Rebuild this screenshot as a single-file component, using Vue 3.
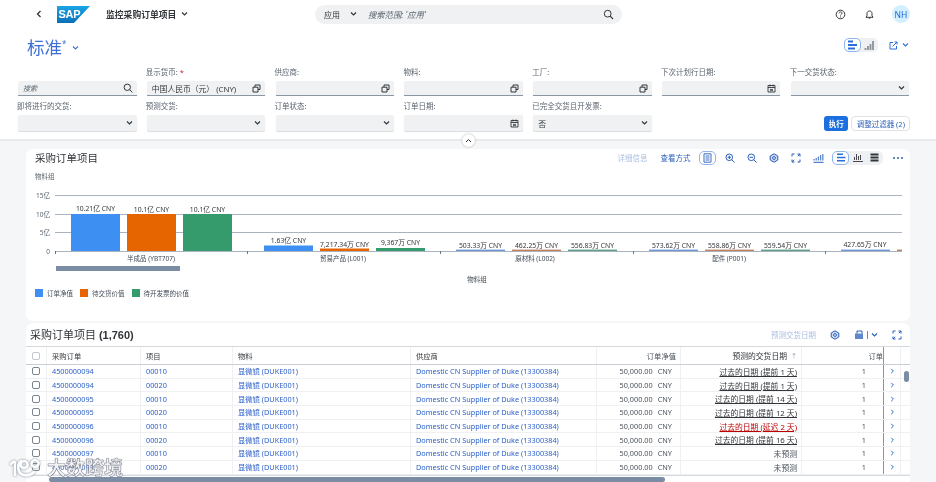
<script setup>
const filterRow1 = [
  { label: '', value: '', placeholder: '搜索', icon: 'search' },
  { label: '显示货币:', required: true, value: '中国人民币（元） (CNY)', icon: 'copy' },
  { label: '供应商:', value: '', icon: 'copy' },
  { label: '物料:', value: '', icon: 'copy' },
  { label: '工厂:', value: '', icon: 'copy' },
  { label: '下次计划行日期:', value: '', icon: 'cal' },
  { label: '下一交货状态:', value: '', icon: 'chev' },
]
const filterRow2 = [
  { label: '即将进行的交货:', value: '', icon: 'chev' },
  { label: '预测交货:', value: '', icon: 'chev' },
  { label: '订单状态:', value: '', icon: 'chev' },
  { label: '订单日期:', value: '', icon: 'cal' },
  { label: '已完全交货且开发票:', value: '否', icon: 'chev' },
]
const groups = [
  { x: 71, tick: 247, label: '半成品 (YBT707)', lx: 151, bars: [[37, '10.21亿 CNY'], [37, '10.1亿 CNY'], [37, '10.1亿 CNY']], ly: [-3, -2, -2] },
  { x: 264, tick: 440, label: '贸易产品 (L001)', lx: 343, bars: [[5.5, '1.63亿 CNY'], [2.5, '7,217.34万 CNY'], [3, '9,367万 CNY']], ly: [-3, -2, -3] },
  { x: 456, tick: 633, label: '原材料 (L002)', lx: 535, bars: [[1.4, '503.33万 CNY'], [1.4, '462.25万 CNY'], [1.4, '556.83万 CNY']], ly: [-2, -2, -2] },
  { x: 649, tick: 825, label: '配件 (P001)', lx: 729, bars: [[1.4, '573.62万 CNY'], [1.4, '558.86万 CNY'], [1.4, '559.54万 CNY']], ly: [-2, -2, -2] },
]
const colors = ['#3d8ff2', '#e76500', '#369b6c']
const softColors = ['#6d97d6', '#c47f5e', '#5f9d84']
const gridLines = [
  { y: 195.5, label: '15亿' },
  { y: 214.5, label: '10亿' },
  { y: 232.5, label: '5亿' },
  { y: 251.5, label: '0' },
]
const legend = [
  { color: colors[0], text: '订单净值' },
  { color: colors[1], text: '待交货价值' },
  { color: colors[2], text: '待开发票的价值' },
]
const barX = (g, i) => g.x + i * 56
const barColor = (g, i) => (g.bars[i][0] < 2 ? softColors[i] : colors[i])
const rows = [
  ['4500000094', '00010', '过去的日期 (提前 1 天)', 'past'],
  ['4500000094', '00020', '过去的日期 (提前 1 天)', 'past'],
  ['4500000095', '00010', '过去的日期 (提前 14 天)', 'past'],
  ['4500000095', '00020', '过去的日期 (提前 12 天)', 'past'],
  ['4500000096', '00010', '过去的日期 (延迟 2 天)', 'late'],
  ['4500000096', '00020', '过去的日期 (提前 16 天)', 'past'],
  ['4500000097', '00010', '未预测', 'none'],
  ['4500000097', '00020', '未预测', 'none'],
]
</script>

<template>
  <div class="page">
    <header class="shell">
      <div class="shell-left">
        <svg class="back" width="6" height="8" viewBox="0 0 6 8"><path d="M4.500 1 1.500 4l3 3" fill="none" stroke="#32363a" stroke-width="1.300" /></svg>
        <svg class="logo" width="34" height="17" viewBox="0 0 34 17">
          <defs>
            <linearGradient id="sapg" x1="0" y1="0" x2="0" y2="1">
              <stop offset="0" stop-color="#1aa5e6" />
              <stop offset="1" stop-color="#0a6fb8" />
            </linearGradient>
          </defs>
          <path d="M0 0h33L17 17H0z" fill="url(#sapg)" />
          <text x="1.500" y="11.500" class="logo-text">SAP</text>
        </svg>
        <span class="app-title">监控采购订单项目</span>
        <svg class="mini" width="7" height="6" viewBox="0 0 7 6"><path d="m1 1.500 2.500 2.500L6 1.500" fill="none" stroke="#32363a" stroke-width="1.200" /></svg>
      </div>
      <div class="shell-search">
        <span class="scope">应用</span>
        <svg class="scope-chev" width="7" height="6" viewBox="0 0 7 6"><path d="m1 1.500 2.500 2.500L6 1.500" fill="none" stroke="#32363a" stroke-width="1.200" /></svg>
        <span class="search-hint">搜索范围: '应用'</span>
        <svg class="search-icon" width="11" height="11" viewBox="0 0 11 11"><circle cx="4.700" cy="4.700" r="3.400" fill="none" stroke="#32363a" stroke-width="1" /><path d="m7.200 7.200 2.800 2.800" stroke="#32363a" stroke-width="1.100" /></svg>
      </div>
      <div class="shell-right">
        <svg width="11" height="11" viewBox="0 0 11 11"><circle cx="5.500" cy="5.500" r="4.300" fill="none" stroke="#32363a" stroke-width="1" /><path d="M4 4.300c.2-1.900 3.200-1.700 3 .1-.1 1-1.500 1-1.500 2.100M5.500 7.500v1" fill="none" stroke="#32363a" stroke-width=".9" /></svg>
        <svg width="11" height="11" viewBox="0 0 11 11"><path d="M2 8.300h7L8 6.800V4.600C8 3 7 2 5.500 2S3 3 3 4.600v2.200zM4.700 9.200h1.600" fill="none" stroke="#32363a" stroke-width="1" /></svg>
        <span class="avatar">NH</span>
      </div>
    </header>

    <section class="filters">
      <div class="variant-row">
        <div class="variant">
          <span class="variant-name">标准<sup>*</sup></span>
          <svg width="7" height="6" viewBox="0 0 7 6"><path d="m1 1.500 2.500 2.500L6 1.500" fill="none" stroke="#3d6fd6" stroke-width="1.100" /></svg>
        </div>
        <div class="variant-actions">
          <div class="seg">
            <span class="seg-on">
              <svg width="11" height="10" viewBox="0 0 11 10"><path d="M1 1.500h5M1 5h9M1 8.500h7" stroke="#2a6fd8" stroke-width="2" /></svg>
            </span>
            <span class="seg-off">
              <svg width="11" height="10" viewBox="0 0 11 10"><path d="M1.500 10V8M4 10V6M6.500 10V4M9 10V1" stroke="#8b9199" stroke-width="1.800" /></svg>
            </span>
          </div>
          <svg class="share" width="9" height="9" viewBox="0 0 9 9"><path d="M4 1.500H1v6.500h6.500V5M3.500 5.500 8 1M5.500 1H8v2.500" fill="none" stroke="#2a6fd8" stroke-width="1" /></svg>
          <svg width="7" height="6" viewBox="0 0 7 6"><path d="m1 1.500 2.500 2.500L6 1.500" fill="none" stroke="#2a6fd8" stroke-width="1.100" /></svg>
        </div>
      </div>

      <div class="filter-grid">
        <div v-for="f in filterRow1" :key="f.label + 'a'" class="field">
          <label class="field-label">{{ f.label }}<i v-if="f.required" class="req">*</i></label>
          <div class="input underlined">
            <span v-if="f.placeholder" class="placeholder">{{ f.placeholder }}</span>
            <span v-else class="value">{{ f.value }}</span>
            <svg v-if="f.icon === 'search'" width="10" height="10" viewBox="0 0 10 10"><circle cx="4.300" cy="4.300" r="3.200" fill="none" stroke="#32363a" stroke-width="1" /><path d="m6.700 6.700 2.700 2.700" stroke="#32363a" stroke-width="1" /></svg>
            <svg v-else-if="f.icon === 'copy'" width="9" height="9" viewBox="0 0 9 9"><path d="M3 3V1h5v4.500H6M1 3.200h5V8H1z" fill="none" stroke="#32363a" stroke-width="1" /></svg>
            <svg v-else-if="f.icon === 'cal'" width="9" height="9" viewBox="0 0 9 9"><path d="M1 1.500h7V8H1zM1 3.500h7M3 .5v2M6 .5v2M3 5l3 2M6 5 3 7" fill="none" stroke="#32363a" stroke-width=".9" /></svg>
            <svg v-else width="7" height="6" viewBox="0 0 7 6"><path d="m1 1.500 2.500 2.500L6 1.500" fill="none" stroke="#32363a" stroke-width="1.200" /></svg>
          </div>
        </div>
        <div v-for="f in filterRow2" :key="f.label + 'b'" class="field">
          <label class="field-label">{{ f.label }}</label>
          <div class="input">
            <span class="value">{{ f.value }}</span>
            <svg v-if="f.icon === 'cal'" width="9" height="9" viewBox="0 0 9 9"><path d="M1 1.500h7V8H1zM1 3.500h7M3 .5v2M6 .5v2M3 5l3 2M6 5 3 7" fill="none" stroke="#32363a" stroke-width=".9" /></svg>
            <svg v-else width="7" height="6" viewBox="0 0 7 6"><path d="m1 1.500 2.500 2.500L6 1.500" fill="none" stroke="#32363a" stroke-width="1.200" /></svg>
          </div>
        </div>
        <div class="filter-buttons">
          <button class="btn-go">执行</button>
          <button class="btn-adapt">调整过滤器 (2)</button>
        </div>
      </div>
    </section>

    <div class="collapse-line">
      <span class="collapse-btn">
        <svg width="7" height="5" viewBox="0 0 7 5"><path d="m1 4 2.500-2.500L6 4" fill="none" stroke="#32363a" stroke-width="1" /></svg>
      </span>
    </div>

    <main class="content">
      <section class="chart-card">
        <div class="chart-head">
          <h2 class="chart-title">采购订单项目</h2>
          <div class="chart-tools">
            <span class="tool-disabled">详细信息</span>
            <span class="tool-link">查看方式</span>
            <span class="round-on">
              <svg width="9" height="10" viewBox="0 0 9 10"><path d="M1 .8h7v8.400H1zM2.500 3h4M2.500 5h4M2.500 7h4" fill="none" stroke="#2a5fb8" stroke-width=".9" /></svg>
            </span>
            <svg class="t1" width="10" height="10" viewBox="0 0 10 10"><circle cx="4.300" cy="4.300" r="3.300" fill="none" stroke="#2a5fb8" /><path d="m6.700 6.700 2.800 2.800M2.600 4.300h3.400M4.300 2.600V6" stroke="#2a5fb8" /></svg>
            <svg class="t2" width="10" height="10" viewBox="0 0 10 10"><circle cx="4.300" cy="4.300" r="3.300" fill="none" stroke="#2a5fb8" /><path d="m6.700 6.700 2.800 2.800M2.600 4.300h3.400" stroke="#2a5fb8" /></svg>
            <svg class="t3" width="10" height="10" viewBox="0 0 10 10"><path d="M5 .8 8.800 3v4L5 9.200 1.200 7V3z" fill="#cfdcf3" stroke="#2a5fb8" /><circle cx="5" cy="5" r="1.400" fill="#fff" stroke="#2a5fb8" /></svg>
            <svg class="t4" width="10" height="10" viewBox="0 0 10 10"><path d="M1 3.500V1h2.500M6.500 1H9v2.500M9 6.500V9H6.500M3.500 9H1V6.500M6.800 3.200 9 1M3.200 6.800 1 9" fill="none" stroke="#2a5fb8" /></svg>
            <svg class="t5" width="11" height="10" viewBox="0 0 11 10"><path d="M1 7.500V6M3.200 7.500V5M5.400 7.500V3.500M7.600 7.500V2M9.800 7.500V1" stroke="#5f88cc" stroke-width="1.300" /><path d="M.5 9.300h10" stroke="#2a5fb8" /></svg>
            <div class="seg seg-chart">
              <span class="seg-on">
                <svg width="10" height="9" viewBox="0 0 10 9"><path d="M1 1.200h6M1 4.500h8.500M1 7.800h8" stroke="#2a6fd8" stroke-width="1.400" /></svg>
              </span>
              <span class="seg-plain">
                <svg width="10" height="9" viewBox="0 0 10 9"><path d="M1.500 7V4M3.500 7V1M5.500 7V3M7.500 7V2M0 8.500h10" stroke="#32363a" stroke-width=".9" /></svg>
              </span>
              <span class="seg-plain">
                <svg width="9" height="9" viewBox="0 0 9 9"><path d="M.5 1.500h8M.5 4.500h8M.5 7.500h8" stroke="#32363a" stroke-width="2" /></svg>
              </span>
            </div>
            <span class="more"><i></i><i></i><i></i></span>
          </div>
        </div>
        <div class="chart-sub">物料组</div>

        <svg class="chart" width="884" height="152" viewBox="26 168 884 152">
          <g v-for="l in gridLines" :key="l.y">
            <line x1="55" x2="902" :y1="l.y" :y2="l.y" class="grid" />
            <text x="50" :y="l.y + 2.500" text-anchor="end" class="axis-num">{{ l.label }}</text>
          </g>
          <line x1="55.500" x2="55.500" y1="251" y2="254" class="tick" />
          <g v-for="g in groups" :key="g.x">
            <line :x1="g.tick + 0.500" :x2="g.tick + 0.500" y1="251" y2="254" class="tick" />
            <text :x="g.lx" y="261" text-anchor="middle" class="group-label">{{ g.label }}</text>
            <g v-for="(b, i) in g.bars" :key="i">
              <rect :x="barX(g, i)" :y="251 - b[0]" width="49" :height="b[0]" :fill="barColor(g, i)" />
              <text :x="barX(g, i) + 24.500" :y="251 - b[0] + g.ly[i]" text-anchor="middle" class="bar-label">{{ b[1] }}</text>
            </g>
          </g>
          <rect x="841" y="249.600" width="49" height="1.400" :fill="softColors[0]" />
          <rect x="897" y="249.600" width="5" height="1.400" :fill="softColors[1]" />
          <text x="865" y="247" text-anchor="middle" class="bar-label">427.65万 CNY</text>
          <rect x="56" y="266" width="124" height="5" class="chart-scroll" />
          <text x="477" y="282" text-anchor="middle" class="group-label">物料组</text>
        </svg>

        <div class="legend">
          <span v-for="l in legend" :key="l.text" class="legend-item">
            <i :style="{ background: l.color }"></i>{{ l.text }}
          </span>
        </div>
      </section>

      <section class="table-card">
        <div class="table-head">
          <h2 class="table-title">采购订单项目 <b>(1,760)</b></h2>
          <div class="table-tools">
            <span class="tool-disabled">预测交货日期</span>
            <svg width="10" height="10" viewBox="0 0 10 10"><path d="M5 .8 8.800 3v4L5 9.200 1.200 7V3z" fill="#cfdcf3" stroke="#2a5fb8" /><circle cx="5" cy="5" r="1.400" fill="#fff" stroke="#2a5fb8" /></svg>
            <span class="export">
              <svg width="10" height="10" viewBox="0 0 10 10"><path d="M1 3.500h8V9H1z" fill="#5f88cc" /><path d="M3 3.500V1h5v2.500" fill="none" stroke="#2a5fb8" /></svg>
              <i class="divider"></i>
              <svg width="7" height="6" viewBox="0 0 7 6"><path d="m1 1.500 2.500 2.500L6 1.500" fill="none" stroke="#2a5fb8" stroke-width="1.200" /></svg>
            </span>
            <svg width="10" height="10" viewBox="0 0 10 10"><path d="M1 3.500V1h2.500M6.500 1H9v2.500M9 6.500V9H6.500M3.500 9H1V6.500M6.800 3.200 9 1M3.200 6.800 1 9" fill="none" stroke="#2a5fb8" /></svg>
          </div>
        </div>

        <div class="table-wrap">
          <div class="row head-row">
            <div class="c c-check"><span class="box box-head"></span></div>
            <div class="c c-po">采购订单</div>
            <div class="c c-item">项目</div>
            <div class="c c-mat">物料</div>
            <div class="c c-sup">供应商</div>
            <div class="c c-net">订单净值</div>
            <div class="c c-date">预测的交货日期 <span class="sort">↑</span></div>
            <div class="c c-qty c-qty-head">订单</div>
            <div class="c c-nav"></div>
          </div>
          <div v-for="(r, i) in rows" :key="i" class="row">
            <div class="c c-check"><span class="box"></span></div>
            <div class="c c-po link">{{ r[0] }}</div>
            <div class="c c-item link">{{ r[1] }}</div>
            <div class="c c-mat link">显微镜 (DUKE001)</div>
            <div class="c c-sup link">Domestic CN Supplier of Duke (13300384)</div>
            <div class="c c-net"><span>50,000.00</span><span class="cur">CNY</span></div>
            <div class="c c-date">
              <span :class="{ past: r[3] === 'past', late: r[3] === 'late', none: r[3] === 'none' }">{{ r[2] }}</span>
            </div>
            <div class="c c-qty">1</div>
            <div class="c c-nav">
              <svg width="5" height="6" viewBox="0 0 5 6"><path d="m1.200 .8 2.200 2.200-2.200 2.200" fill="none" stroke="#2a6fd8" stroke-width="1" /></svg>
            </div>
          </div>
          <span class="v-thumb"></span>
        </div>
        <div class="h-track"><span class="h-thumb"></span></div>
      </section>
    </main>

    <div class="watermark">
      <svg class="wm-logo" width="36" height="27" viewBox="0 0 36 27"><path d="M3 10c2-3 4-3 4-1v12M13 7c-4 3-4 13 3 14 4 1 8-1 10-3M16 7a3.500 3.500 0 1 0 .1 0M27 6a3.500 3.500 0 1 0 .1 0" fill="none" stroke="#fff" stroke-width="2.600" stroke-linecap="round" /></svg>
      <span class="wm-text">大数跨境</span>
    </div>
  </div>
</template>

<style>
html, body { margin: 0; background: #fff; overflow: hidden; }
</style>

<style scoped>
.page {
  position: relative;
  width: 936px;
  height: 482px;
  overflow: hidden;
  display: flex;
  flex-direction: column;
  background: #fff;
  color: #32363a;
  font-family: "Noto Sans", "Noto Sans CJK SC", sans-serif;
  filter: blur(0.4px);
}
h2 { margin: 0; font-weight: 400; }
svg { display: block; flex: none; }

/* shell */
.shell { height: 28px; flex: none; display: flex; align-items: center; box-sizing: border-box; }
.shell-left { width: 315px; display: flex; align-items: center; padding-left: 36px; box-sizing: border-box; }
.back { margin-right: 15px; }
.logo { margin-right: 15px; margin-top: 1px; }
.logo-text { font: 800 11px "Liberation Sans", sans-serif; fill: #fff; letter-spacing: -.3px; }
.app-title { font-size: 8.800px; font-weight: 700; color: #32363a; margin-right: 5px; }
.shell-search {
  width: 307px; height: 19px; border-radius: 10px; background: #eff1f2;
  display: flex; align-items: center; padding: 0 8px 0 9px; box-sizing: border-box;
}
.scope { font-size: 8px; margin-right: 10px; }
.scope-chev { margin-right: 11px; }
.search-hint { font-size: 8.300px; font-style: italic; color: #5b6570; flex: 1; }
.shell-right { flex: 1; display: flex; align-items: center; justify-content: flex-end; padding-right: 26px; gap: 18px; }
.avatar {
  width: 18px; height: 18px; border-radius: 50%; background: #d1efff; color: #1f68d8;
  font-size: 8.500px; display: flex; align-items: center; justify-content: center; margin-left: -1px;
}

/* filters */
.filters { flex: none; box-sizing: border-box; }
.variant-row { height: 38px; display: flex; align-items: flex-start; justify-content: space-between; padding: 9px 27px 0 27px; box-sizing: border-box; }
.variant { display: flex; align-items: center; gap: 6px; height: 21px; }
.variant-name { font-size: 17.500px; line-height: 21px; color: #3d6fd6; }
.variant-name sup { font-size: 8px; line-height: 0; vertical-align: 7px; }
.variant-actions { display: flex; align-items: center; gap: 4px; margin-top: 1px; }
.seg { display: flex; align-items: center; background: #eef0f2; border-radius: 5px; height: 14px; }
.seg-on {
  width: 17px; height: 14px; border: 1px solid #8fb4ec; border-radius: 5px; background: #fff; box-sizing: border-box;
  display: flex; align-items: center; justify-content: center;
}
.seg-off, .seg-plain { width: 17px; height: 14px; display: flex; align-items: center; justify-content: center; }
.share { margin-left: 7px; }
.filter-grid {
  display: grid;
  grid-template-columns: repeat(7, 118.500px);
  column-gap: 10.300px;
  padding-left: 18px;
}
.field { display: flex; flex-direction: column; }
.field-label { height: 15px; font-size: 7.500px; line-height: 13px; color: #5b6570; white-space: nowrap; margin-left: -1px; }
.req { color: #c62b2b; font-style: normal; margin-left: 2px; }
.input {
  height: 16px; background: #eff1f2; border-radius: 2px; display: flex; align-items: center;
  justify-content: space-between; padding: 0 4px 0 5px; box-sizing: border-box; box-shadow: 0 1px 1px rgba(40,60,90,.18);
}
.underlined { border-bottom: 1px solid #8b96a5; border-radius: 2px 2px 0 0; height: 15px; box-shadow: none; margin-bottom: 4px; }
.value { font-size: 7.800px; color: #32363a; white-space: nowrap; }
.placeholder { font-size: 7px; font-style: italic; color: #5b6570; }
.filter-buttons { grid-column: 6 / 8; display: flex; align-items: flex-end; justify-content: flex-end; gap: 3px; margin-right: -1px; }
.btn-go {
  width: 24px; height: 15px; border: 0; border-radius: 3px; background: #1b6fe0; color: #fff;
  font: 700 7.500px "Noto Sans", "Noto Sans CJK SC", sans-serif; padding: 0;
}
.btn-adapt {
  width: 59px; height: 15px; border: 1px solid #dfe3e8; border-radius: 4px; background: #fff; color: #2a5fb8;
  font: 7.500px "Noto Sans", "Noto Sans CJK SC", sans-serif; padding: 0; white-space: nowrap;
}

.collapse-line { height: 10px; flex: none; margin-top: 8px; background: #f4f6f7; border-top: 2px solid #e8ebee; position: relative; box-sizing: border-box; }
.collapse-btn {
  position: absolute; left: 462px; top: -7px; width: 13px; height: 13px; border-radius: 50%; background: #fff;
  box-shadow: 0 0 2px rgba(0,0,0,.35); display: flex; align-items: center; justify-content: center;
}

/* content */
.content { flex: 1; min-height: 0; background: #f4f6f7; padding: 0 26px; display: flex; flex-direction: column; gap: 2px; }
.chart-card { height: 172px; flex: none; background: #fff; border-radius: 7px; position: relative; overflow: hidden; }
.chart-head { height: 17px; display: flex; justify-content: space-between; align-items: center; padding: 0 7px 0 9px; }
.chart-title { font-size: 10.500px; color: #32363a; }
.chart-tools { display: flex; align-items: center; gap: 12px; }
.tool-disabled { font-size: 7.500px; color: #a9bee2; }
.tool-link { font-size: 7.500px; color: #2a5fb8; margin-left: 1px; margin-right: -3px; }
.round-on {
  width: 17px; height: 14px; border: 1px solid #8fb4ec; border-radius: 5px; display: flex; align-items: center; justify-content: center; box-sizing: border-box; margin-right: -3px;
}
.seg-chart { margin-left: -4px; }
.more { display: flex; gap: 1.800px; margin-left: -2px; }
.more i { width: 2px; height: 2px; border-radius: 50%; background: #2a5fb8; }
.chart-sub { font-size: 6.500px; line-height: 10px; color: #5b6570; padding-left: 9px; margin-top: 6px; }
.chart { position: absolute; left: 0; top: 19px; }
.grid { stroke: #a9b4c0; stroke-width: 1; }
.tick { stroke: #6a7480; stroke-width: 1; }
.axis-num { font-size: 6.500px; fill: #5b6570; }
.group-label { font-size: 6.500px; fill: #404a55; }
.bar-label { font-size: 6.800px; fill: #32363a; }
.chart-scroll { fill: #7b8ca5; }
.legend { position: absolute; left: 9px; top: 139px; display: flex; gap: 7px; font-size: 6.500px; color: #404a55; }
.legend-item { display: flex; align-items: center; gap: 4px; white-space: nowrap; }
.legend-item i { width: 8px; height: 8px; display: block; }

/* table */
.table-card { flex: 1; min-height: 0; background: #fff; border-radius: 7px 7px 0 0; display: flex; flex-direction: column; overflow: hidden; }
.table-head { height: 23px; flex: none; display: flex; justify-content: space-between; align-items: center; padding: 0 8px 0 4px; box-sizing: border-box; }
.table-title { font-size: 11px; color: #32363a; margin-top: -1px; }
.table-title b { font-family: "Liberation Sans", sans-serif; font-weight: 700; font-size: 11px; }
.table-tools { display: flex; align-items: center; gap: 14px; }
.export { display: flex; align-items: center; gap: 3px; }
.divider { width: 1px; height: 8px; background: #5f88cc; }
.table-wrap { position: relative; border-top: 1px solid #d5dadf; border-bottom: 1px solid #d5dadf; flex: none; }
.row { display: flex; height: 13.700px; border-bottom: 1px solid #eef0f2; box-sizing: border-box; font-size: 7.300px; }
.head-row { height: 18px; border-bottom: 1px solid #c9ced4; color: #32363a; }
.c { display: flex; align-items: center; box-sizing: border-box; border-right: 1px solid #eef0f2; padding: 0 5px; white-space: nowrap; overflow: hidden; flex: none; }
.c-check { width: 21px; justify-content: center; padding: 0; }
.c-po { width: 94px; }
.c-item { width: 92px; }
.c-mat { width: 178px; }
.c-sup { width: 186px; }
.c-net { width: 84px; justify-content: flex-end; gap: 5px; padding-right: 4px; color: #4a525c; }
.row:not(.head-row) .c-net { padding-right: 8px; }
.c-date { width: 121px; justify-content: flex-end; gap: 3px; padding-right: 4px; font-size: 7.800px; }
.c-qty { width: 82px; justify-content: flex-end; padding-right: 17px; color: #4a525c; border-right: 1px solid #8c949c; }
.c-qty-head { padding-right: 0; }
.c-nav { width: 17px; justify-content: center; padding: 0; }
.link { color: #2a5fc8; }
.box { width: 8px; height: 8px; border: 1px solid #7a8590; border-radius: 2px; display: block; box-sizing: border-box; }
.box-head { border-color: #c2c8ce; }
.sort { font-size: 6px; color: #8b96a5; margin-left: 1px; }
.past { text-decoration: underline; color: #32363a; }
.late { text-decoration: underline; color: #bb0000; }
.none { color: #4a525c; }
.v-thumb { position: absolute; left: 878px; top: 24px; width: 5px; height: 11px; border-radius: 3px; background: #7b8ca5; }
.h-track { height: 8px; position: relative; flex: none; }
.h-thumb { position: absolute; left: 23px; top: 1px; width: 616px; height: 5px; border-radius: 3px; background: #7b8ca5; }

/* watermark */
.watermark { position: absolute; left: 8px; top: 452px; display: flex; align-items: center; gap: 3px; pointer-events: none; }
.wm-logo { filter: drop-shadow(0 0 1px #667788); opacity: .9; }
.wm-text {
  font-size: 19px; line-height: 27px; font-weight: 700; color: rgba(255,255,255,.9);
  margin-top: 3px;
  -webkit-text-stroke: .4px #778;
  text-shadow: 0 0 1px #667788;
}
</style>
